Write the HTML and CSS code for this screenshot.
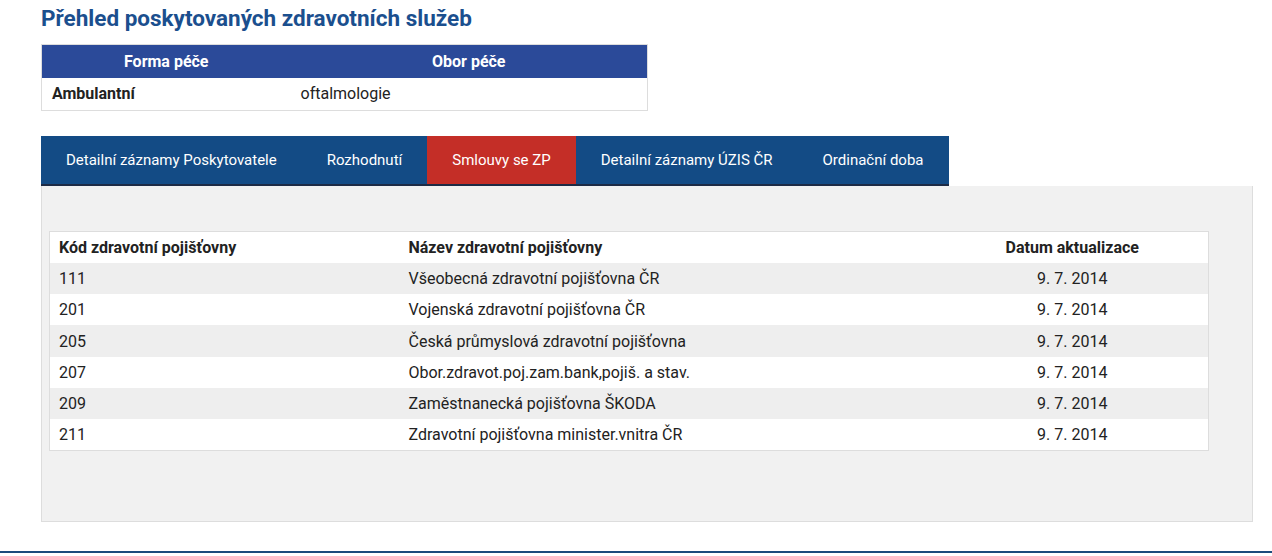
FILE: index.html
```html
<!DOCTYPE html>
<html lang="cs">
<head>
    <meta charset="UTF-8">
    <meta name="viewport" content="width=device-width, initial-scale=1.0">
    <title>Přehled poskytovaných zdravotních služeb</title>
    <link rel="stylesheet" href="styles.css">
</head>
<body>

<div class="page">
    <h2 class="title">Přehled poskytovaných zdravotních služeb</h2>

    <table class="care">
        <thead>
            <tr>
                <th class="care-form">Forma péče</th>
                <th>Obor péče</th>
            </tr>
        </thead>
        <tbody>
            <tr>
                <td class="care-form"><strong>Ambulantní</strong></td>
                <td>oftalmologie</td>
            </tr>
        </tbody>
    </table>

    <ul class="tabs">
        <li><a href="#">Detailní záznamy Poskytovatele</a></li>
        <li><a href="#">Rozhodnutí</a></li>
        <li class="active"><a href="#">Smlouvy se ZP</a></li>
        <li><a href="#">Detailní záznamy ÚZIS ČR</a></li>
        <li><a href="#">Ordinační doba</a></li>
    </ul>

    <div class="panel">
        <table class="insurers">
            <thead>
                <tr>
                    <th class="code">Kód zdravotní pojišťovny</th>
                    <th class="name">Název zdravotní pojišťovny</th>
                    <th class="date">Datum aktualizace</th>
                </tr>
            </thead>
            <tbody>
                <tr><td>111</td><td>Všeobecná zdravotní pojišťovna ČR</td><td class="date">9. 7. 2014</td></tr>
                <tr><td>201</td><td>Vojenská zdravotní pojišťovna ČR</td><td class="date">9. 7. 2014</td></tr>
                <tr><td>205</td><td>Česká průmyslová zdravotní pojišťovna</td><td class="date">9. 7. 2014</td></tr>
                <tr><td>207</td><td>Obor.zdravot.poj.zam.bank,pojiš. a stav.</td><td class="date">9. 7. 2014</td></tr>
                <tr><td>209</td><td>Zaměstnanecká pojišťovna ŠKODA</td><td class="date">9. 7. 2014</td></tr>
                <tr><td>211</td><td>Zdravotní pojišťovna minister.vnitra ČR</td><td class="date">9. 7. 2014</td></tr>
            </tbody>
        </table>
    </div>
</div>

<div class="footer"></div>

</body>
</html>
```

FILE: styles.css
```css
* {
    box-sizing: border-box;
}

body {
    margin: 0;
    font-family: Roboto, "Liberation Sans", sans-serif;
    font-size: 16px;
    color: #222;
    background: #fff;
}

.page {
    padding: 5px 19px 0 41px;
    height: 551px;
}

.title {
    margin: 0 0 13px;
    font-size: 22.5px;
    line-height: 26px;
    font-weight: bold;
    color: #1b4f8e;
}

/* forma a obor pece */
.care {
    width: 607px;
    border-collapse: collapse;
    border: 1px solid #ddd;
}

.care th {
    background: #2b4a99;
    color: #fff;
    font-weight: bold;
    height: 33px;
    padding: 0 10px;
    text-align: center;
}

.care td {
    height: 33px;
    padding: 0 10px;
}

.care .care-form {
    width: 249px;
}

/* zalozky */
.tabs {
    list-style: none;
    margin: 25px 0 0;
    padding: 0;
    display: inline-flex;
    vertical-align: top;
    background: #134b85;
    border-bottom: 2px solid #1d2b45;
}

.tabs li {
    white-space: nowrap;
}

.tabs a {
    display: block;
    padding: 0 25px;
    line-height: 48px;
    color: #fff;
    text-decoration: none;
    font-size: 15px;
}

.tabs .active a {
    background: #c42e27;
}

.panel {
    width: 1212px;
    height: 336px;
    background: #f1f1f1;
    border: 1px solid #ddd;
    border-top: none;
    padding: 45px 0 0 7px;
}

/* smlouvy se ZP */
.insurers {
    width: 1160px;
    border-collapse: collapse;
    border: 1px solid #ddd;
    background: #fff;
}

.insurers th,
.insurers td {
    height: 31.3px;
    padding: 0 9px;
    text-align: left;
}

.insurers th {
    font-weight: bold;
}

.insurers .code {
    width: 350px;
}

.insurers .date {
    width: 272px;
    text-align: center;
}

.insurers tbody tr:nth-child(odd) {
    background: #eee;
}

.footer {
    height: 5px;
    border-top: 2px solid #1b4b7c;
}
```
